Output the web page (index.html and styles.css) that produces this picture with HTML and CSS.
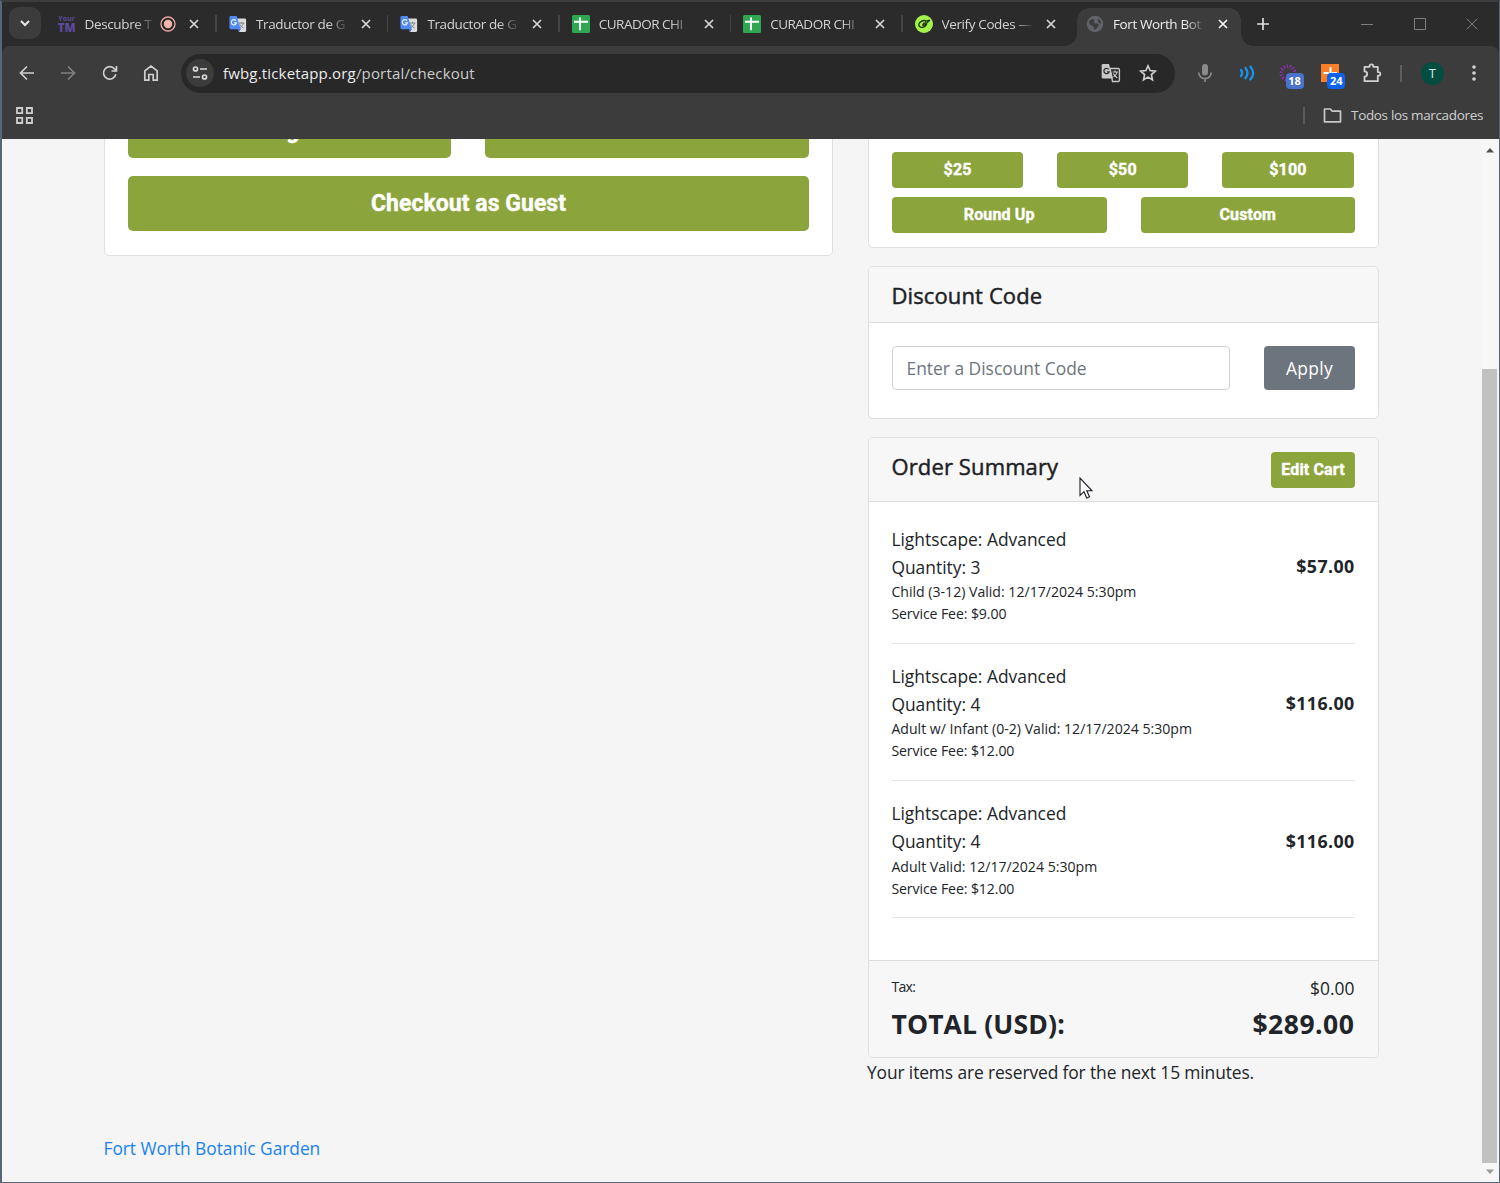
FILE: index.html
```html
<!DOCTYPE html>
<html lang="es">
<head>
<meta charset="utf-8">
<title>Fort Worth Botanic Garden</title>
<link rel="stylesheet" href="styles.css">
</head>
<body>
<svg class="defs" width="0" height="0" aria-hidden="true">
  <symbol id="i-close" viewBox="0 0 10 10"><path d="M1 1l8 8M9 1l-8 8" stroke="currentColor" stroke-width="1.7" fill="none"/></symbol>
  <symbol id="i-translate" viewBox="0 0 20 20">
    <path d="M8 4h9.500a1.500 1.500 0 0 1 1.500 1.500v12a1.500 1.500 0 0 1-1.500 1.500h-6.500z" fill="#dcdcdc"/>
    <path d="M11 9h6M14 7.500v1.500M16 9c-.5 2.500-2 4-4 5M12.300 10.500c1 2 2 3 4 4" stroke="#777b80" stroke-width="1" fill="none"/>
    <path d="M2 1h6.500l4.700 14.800H2A1.500 1.500 0 0 1 .5 14.300V2.500A1.500 1.500 0 0 1 2 1z" fill="#4f8af5"/>
    <path d="M11 19l-1-3.200h3.200z" fill="#2f62c4"/>
    <path d="M7.800 6.400A2.900 2.900 0 1 0 8.300 8.700H5.700" stroke="#e8f0ff" stroke-width="1.300" fill="none"/>
  </symbol>
  <symbol id="i-sheet" viewBox="0 0 18 18"><rect width="18" height="18" rx="1.500" fill="#2fa750"/><path d="M2 6.800h14M8 2.500v12.800" stroke="#fff" stroke-width="2" fill="none"/></symbol>
</svg>
<div class="window">
  <header class="tabs">
    <button class="tab-search"><svg width="12" height="12" viewBox="0 0 12 12"><path d="M2 4l4 4 4-4" fill="none" stroke="#e6e6e6" stroke-width="2"/></svg></button>
    <div class="tab">
      <span class="favicon yourtm"><span>Your</span><b>TM</b></span>
      <span class="title short">Descubre T</span>
      <svg class="rec" width="16" height="16" viewBox="0 0 16 16"><circle cx="8" cy="8" r="7" fill="none" stroke="#e8a49e" stroke-width="1.400"/><circle cx="8" cy="8" r="4.200" fill="#f5b5af"/></svg>
      <svg class="close"><use href="#i-close"/></svg>
    </div>
    <div class="tab"><svg class="favicon"><use href="#i-translate"/></svg><span class="title">Traductor de G</span><svg class="close"><use href="#i-close"/></svg></div>
    <div class="tab"><svg class="favicon"><use href="#i-translate"/></svg><span class="title">Traductor de G</span><svg class="close"><use href="#i-close"/></svg></div>
    <div class="tab"><svg class="favicon"><use href="#i-sheet"/></svg><span class="title caps">CURADOR CHI</span><svg class="close"><use href="#i-close"/></svg></div>
    <div class="tab"><svg class="favicon"><use href="#i-sheet"/></svg><span class="title caps">CURADOR CHI</span><svg class="close"><use href="#i-close"/></svg></div>
    <div class="tab last">
      <svg class="favicon" viewBox="0 0 18 18"><circle cx="9" cy="9" r="9" fill="#a4f34a"/><path d="M11 5.800C8 4.800 3.800 7 3.800 9.800s4 3.400 6.500 1.200c1.600-1.400 1.600-3 .2-3.200-1.600-.2-3.200 1.700-2.500 2.700 1.500.4 4-3 7-5.500M10 6.500l4.500-1.300" fill="none" stroke="#18320a" stroke-width="1.300"/></svg>
      <span class="title">Verify Codes —</span><svg class="close"><use href="#i-close"/></svg>
    </div>
    <div class="tab active">
      <svg class="favicon" viewBox="0 0 18 18"><circle cx="9" cy="9" r="8.200" fill="#60636a"/><path d="M3 6.500c1.500-2 3-2.500 5-2 1.500 1-1 2.300.3 3.500 1.500 1 3.700 0 4.500 1.500.6 1.500-1.200 2-1.800 3.200-.6 1.500-2 2-3 1.500 0-2-.3-3-1.700-3.500C4.800 10.200 3 9.500 3 6.500zM12 3.500c2 1 3 3 3 5-1.500 0-2.800-1-3-2.300z" fill="#3c3c3c"/></svg>
      <span class="title">Fort Worth Bot</span><svg class="close"><use href="#i-close"/></svg>
    </div>
    <button class="new-tab"><svg width="12" height="12" viewBox="0 0 12 12"><path d="M6 0v12M0 6h12" stroke="#dedede" stroke-width="1.700"/></svg></button>
    <div class="controls">
      <svg width="12" height="12" viewBox="0 0 12 12"><path d="M0 6.500h12"/></svg>
      <svg width="12" height="12" viewBox="0 0 12 12"><path d="M.5 .5h11v11H.5z"/></svg>
      <svg width="12" height="12" viewBox="0 0 12 12"><path d="M.5 .5l11 11M11.500 .5l-11 11"/></svg>
    </div>
  </header>
  <div class="chrome">
    <div class="toolbar">
      <div class="nav">
        <svg width="16" height="16" viewBox="0 0 16 16"><path d="M15 8H2M8 1.500L1.500 8 8 14.500"/></svg>
        <svg class="dim" width="16" height="16" viewBox="0 0 16 16"><path d="M1 8h13M8 1.500L14.500 8 8 14.500"/></svg>
        <svg width="16" height="16" viewBox="0 0 16 16"><path d="M13.800 9.200A6.200 6.200 0 1 1 12.700 4.200L14.500 6M14.500 1v5h-5"/></svg>
        <svg width="16" height="18" viewBox="0 0 16 18"><path d="M1.800 16.200V6.800L8 2l6.200 4.800v9.400H10.200v-5.700H5.800v5.700z"/></svg>
      </div>
      <div class="omnibox">
        <span class="site"><svg width="16" height="14" viewBox="0 0 16 14"><g fill="none" stroke="#d8d8d8" stroke-width="1.700"><circle cx="3.500" cy="3" r="2"/><path d="M8 3h7M1 11h7"/><circle cx="12.500" cy="11" r="2"/></g></svg></span>
        <span class="url">fwbg.ticketapp.org<span>/portal/checkout</span></span>
        <svg width="20" height="20" viewBox="0 0 20 20"><path d="M9 5.500h8.200a1.200 1.200 0 0 1 1.200 1.200v10.600a1.200 1.200 0 0 1-1.200 1.200h-5.700z" fill="none" stroke="#c8c8c8" stroke-width="1.400"/><path d="M11.500 9h5.500M14 7.500V9M16 9c-.5 2.500-1.800 4-3.500 5M12.300 10.500c1 2 2 3 4 4.500" stroke="#c8c8c8" stroke-width="1.200" fill="none"/><path d="M2 1h6l4 14.500H2A1.300 1.300 0 0 1 .7 14.200V2.300A1.300 1.300 0 0 1 2 1z" fill="#c8c8c8"/><path d="M7.800 6.400A2.700 2.700 0 1 0 8.200 8.800H5.800" stroke="#333" stroke-width="1.300" fill="none"/></svg>
        <svg class="star" width="18" height="18" viewBox="0 0 18 18"><path d="M9 1.800l2.100 4.800 5.200.5-3.900 3.500 1.100 5.200L9 13.100l-4.500 2.700 1.100-5.200L1.700 7.100l5.200-.5z" fill="none" stroke="#d0d0d0" stroke-width="1.600"/></svg>
      </div>
      <div class="extensions">
        <div class="ext"><svg width="16" height="20" viewBox="0 0 16 20"><rect x="5" y="1" width="6" height="11.500" rx="3" fill="#8a8a8a"/><path d="M1.800 9.500a6.200 6.200 0 0 0 12.400 0M8 15.500V19" stroke="#8a8a8a" stroke-width="1.700" fill="none"/></svg></div>
        <div class="ext"><svg width="18" height="16" viewBox="0 0 18 16"><g fill="none" stroke="#1b93ea" stroke-width="2.300" stroke-linecap="round"><path d="M3 5q2.300 3 0 6M7.500 3q4 5 0 10M12.300 1.500q5.800 6.500 0 13"/></g></svg></div>
        <div class="ext"><svg width="18" height="18" viewBox="0 0 18 18"><circle cx="9" cy="9" r="6.800" fill="none" stroke="#8a2fa8" stroke-width="3.600" stroke-dasharray="1.500 1.550"/></svg><span class="badge soft">18</span></div>
        <div class="ext"><svg width="18" height="18" viewBox="0 0 18 18"><path d="M0 0h18v18H0z" fill="#fb7f28"/><path d="M9.500 3v6M2.500 9H8M11 9h5" stroke="#fff" stroke-width="2"/></svg><span class="badge">24</span></div>
        <div class="ext"><svg width="20" height="20" viewBox="0 0 20 20"><path d="M2.500 3.800h5V3.200a1.900 1.900 0 0 1 3.800 0v.6h4.500v5.300h.7a1.700 1.700 0 0 1 0 3.600h-.7v5.500H2.500V13.700c3.600-.3 3.600-5 0-5.300z" fill="none" stroke="#d0d0d0" stroke-width="1.800" stroke-linejoin="round"/></svg></div>
      </div>
      <span class="divider"></span>
      <span class="avatar">T</span>
      <svg class="menu" width="4" height="16" viewBox="0 0 4 16"><g fill="#d4d4d4"><circle cx="2" cy="2" r="1.800"/><circle cx="2" cy="8" r="1.800"/><circle cx="2" cy="14" r="1.800"/></g></svg>
    </div>
    <div class="bookmarks">
      <svg width="17" height="17" viewBox="0 0 17 17"><path d="M1 1h5.200v5.200H1zM10.800 1H16v5.200h-5.200zM1 10.800h5.200V16H1zM10.800 10.800H16V16h-5.200z" fill="none" stroke="#cfcfcf" stroke-width="1.800"/></svg>
      <div class="all"><svg width="19" height="15" viewBox="0 0 19 15"><path d="M1.500 1h5.800l2 2.200h8.200v10.600h-16z" fill="none" stroke="#c8c8c8" stroke-width="1.700" stroke-linejoin="round"/></svg><span>Todos los marcadores</span></div>
    </div>
  </div>
  <div class="viewport">
    <main class="page">
      <div class="columns">
        <section class="card login">
          <div class="pair"><button class="btn big">Login</button><button class="btn big"></button></div>
          <button class="btn big">Checkout as Guest</button>
        </section>
        <aside class="side">
          <section class="card donate">
            <div class="row amounts"><button class="btn">$25</button><button class="btn">$50</button><button class="btn">$100</button></div>
            <div class="row"><button class="btn">Round Up</button><button class="btn">Custom</button></div>
          </section>
          <section class="card discount">
            <h2>Discount Code</h2>
            <div class="form"><input type="text" placeholder="Enter a Discount Code"><button class="apply">Apply</button></div>
          </section>
          <section class="card order">
            <div class="head"><h2>Order Summary</h2><button class="btn">Edit Cart</button></div>
            <div class="items">
              <div class="item"><div>Lightscape: Advanced<br>Quantity: 3<small>Child (3-12) Valid: 12/17/2024 5:30pm<br><span class="fee">Service Fee: $9.00</span></small></div><strong>$57.00</strong></div>
              <div class="item"><div>Lightscape: Advanced<br>Quantity: 4<small>Adult w/ Infant (0-2) Valid: 12/17/2024 5:30pm<br><span class="fee">Service Fee: $12.00</span></small></div><strong>$116.00</strong></div>
              <div class="item"><div>Lightscape: Advanced<br>Quantity: 4<small>Adult Valid: 12/17/2024 5:30pm<br><span class="fee">Service Fee: $12.00</span></small></div><strong>$116.00</strong></div>
            </div>
            <div class="foot">
              <div class="tax"><small>Tax:</small><span>$0.00</span></div>
              <div class="total"><span>TOTAL (USD):</span><span class="sum">$289.00</span></div>
            </div>
          </section>
          <p class="reserve">Your items are reserved for the next 15 minutes.</p>
        </aside>
      </div>
      <footer><a>Fort Worth Botanic Garden</a></footer>
    </main>
    <div class="scrollbar">
      <svg width="8" height="5" viewBox="0 0 8 5"><path d="M0 4.500L4 0l4 4.500z" fill="#505050"/></svg>
      <span class="thumb"></span>
      <svg width="8" height="5" viewBox="0 0 8 5"><path d="M0 .5L4 5 8 .5z" fill="#9a9a9a"/></svg>
    </div>
  </div>
  <svg class="cursor" width="14" height="22" viewBox="0 0 14 22"><path d="M1 1v17.500l4-3.800L7.700 21l2.800-1.200-2.700-6H13z" fill="#fff" stroke="#1c1c28" stroke-width="1.100"/></svg>
</div>
</body>
</html>
```
FILE: styles.css
```css
* { box-sizing: border-box; }
body { margin: 0; font-family: "Open Sans", "Noto Sans", sans-serif; color: #212529; }
button { border: 0; padding: 0; font: inherit; color: inherit; background: none; }
svg { display: block; flex: none; }
.defs { position: absolute; }

.window {
  position: relative; display: flex; flex-direction: column;
  width: 1500px; height: 1183px; overflow: hidden;
  border: solid #566779; border-width: 0 1px 1px 2px; border-top: 2px solid #3d3d3d;
  background: #2b2b2b;
}

/* Tab strip */
.tabs { display: flex; height: 44px; padding-left: 7px; color: #d2d2d2; font-size: 13.5px; letter-spacing: -.38px; }
.tab-search {
  display: flex; align-items: center; justify-content: center;
  width: 32px; height: 32px; margin: 5px 3.6px 0 0; border-radius: 10px; background: #3c3c3c;
}
.tab { position: relative; display: flex; align-items: center; width: 171.4px; padding: 0 16.500px 0 13px; }
.tab::after { content: ""; position: absolute; right: -1px; top: 13px; width: 1.500px; height: 17px; background: #454545; }
.tab.last::after { display: none; }
.favicon { width: 18px; height: 18px; margin-right: 9px; flex: none; }
.title {
  width: 91px; height: 24px; line-height: 24px; white-space: nowrap;
  -webkit-mask-image: linear-gradient(to right, #000 72px, transparent 93px);
  mask-image: linear-gradient(to right, #000 72px, transparent 93px);
}
.title.short { width: 67px; margin-right: 8px; -webkit-mask-image: linear-gradient(to right, #000 50px, transparent 71px); mask-image: linear-gradient(to right, #000 50px, transparent 71px); }
.title.caps { letter-spacing: -.5px; }
.close { width: 10px; height: 10px; margin-left: auto; color: #d6d6d6; }
.yourtm { display: flex; flex-direction: column; color: #5b4a9c; font: 700 7px/8px "Open Sans", sans-serif; letter-spacing: 0; text-align: center; }
.yourtm b { font-size: 11.5px; line-height: 10px; }
.tab.active { color: #ededed; }
.tab.active::after { display: none; }
.tab.active::before {
  content: ""; position: absolute; left: -8px; top: 6px; width: 188px; height: 38px;
  background:
    radial-gradient(circle at 0 0, transparent 11.500px, #3c3c3c 12px) left bottom / 12px 12px no-repeat,
    radial-gradient(circle at 12px 0, transparent 11.500px, #3c3c3c 12px) right bottom / 12px 12px no-repeat;
}
.tab.active::before { background: none; }
.tab.active {
  background:
    linear-gradient(#3c3c3c, #3c3c3c) 4px 18px / 164px 26px no-repeat,
    linear-gradient(#3c3c3c, #3c3c3c) 16px 6px / 140px 12px no-repeat,
    radial-gradient(circle at 12px 12px, #3c3c3c 11.500px, transparent 12px) 4px 6px / 12px 12px no-repeat,
    radial-gradient(circle at 0 12px, #3c3c3c 11.500px, transparent 12px) 156px 6px / 12px 12px no-repeat;
}
.tab.active::before {
  left: -8px; top: 32px; width: 188px; height: 12px;
  background:
    radial-gradient(circle at 0 0, transparent 11.500px, #3c3c3c 12px) left / 12px 12px no-repeat,
    radial-gradient(circle at 12px 0, transparent 11.500px, #3c3c3c 12px) right / 12px 12px no-repeat;
}
.tab.active .close { color: #f4f4f4; }
.new-tab { width: 38px; padding-left: 13px; }
.controls { display: flex; align-items: center; gap: 40.5px; margin-left: auto; padding-right: 20.600px; }
.controls path { fill: none; stroke: #7d7d7d; }

/* Toolbar and bookmarks */
.chrome { height: 93px; background: #3c3c3c; border-radius: 8px 8px 0 0; color: #cfcfcf; }
.toolbar { display: flex; align-items: center; height: 54px; }
.nav { display: flex; width: 179px; padding-left: 17px; gap: 25.3px; align-items: center; }
.nav path { fill: none; stroke: #cfcfcf; stroke-width: 1.700; }
.nav .dim path { stroke: #808080; }
.omnibox { display: flex; align-items: center; width: 994px; height: 39px; padding: 0 18px 0 5px; border-radius: 20px; background: #282828; }
.site { display: flex; align-items: center; justify-content: center; width: 28px; height: 28px; margin-right: 9px; border-radius: 50%; background: #3c3c3c; }
.url { flex: 1; color: #ececec; font-size: 15px; letter-spacing: .17px; }
.url span { color: #cccccc; }
.omnibox .star { margin-left: 18px; }
.extensions { display: flex; margin-left: 9.400px; }
.ext { position: relative; display: flex; align-items: center; justify-content: center; width: 41.6px; height: 36px; }
.badge {
  position: absolute; left: 18px; top: 18px; width: 18px; height: 16px; border-radius: 4px;
  background: #0d63f0; color: #fff; font-size: 11px; font-weight: 700; line-height: 16px; text-align: center;
}
.badge.soft { background: #4a72cc; }
.divider { width: 2px; height: 17px; margin-left: 8px; background: #5e5e5e; }
.avatar { width: 23px; height: 23px; margin-left: 18.600px; border-radius: 50%; background: #034d40; color: #d8ebe4; font-size: 13px; line-height: 23px; text-align: center; }
.menu { margin-left: 28px; }
.bookmarks { display: flex; align-items: center; height: 31px; padding: 0 16px 0 14px; }
.all { display: flex; align-items: center; gap: 9px; margin-left: auto; padding-left: 18px; font-size: 13.5px; letter-spacing: -.34px; line-height: 17px; border-left: 2px solid #5a5a5a; }

/* Scrolled page */
.viewport { display: flex; flex: 1; min-height: 0; overflow: hidden; background: #f5f5f5; }
.page { flex: 1; height: 1103px; margin-top: -60px; padding-left: 102px; font-size: 17.4px; line-height: 27.6px; }
.columns { display: flex; align-items: flex-start; gap: 35px; }
.card { border: 1px solid #dfdfdf; border-radius: 5px; background: #fff; }
.login { width: 729px; height: 176.500px; padding: 23px 23px 0; }
.login > .btn { display: block; width: 681px; margin-top: 18px; }
.pair { display: flex; gap: 34px; }
.pair .btn { width: 323px; }
.pair .btn + .btn { width: 324px; }
.btn { height: 36px; border-radius: 4px; background: #8ca43c; color: #fff; font: 700 16px/36px Roboto, sans-serif; letter-spacing: .15px; -webkit-text-stroke: .4px #fff; }
.btn.big { height: 55px; font-size: 23px; line-height: 56px; letter-spacing: .04px; border-radius: 5px; }
.side { width: 511px; }
.donate { height: 168.500px; padding: 72px 23px 0; }
.donate .row { display: flex; gap: 34px; margin-bottom: 9px; }
.donate .amounts { padding-right: 1.500px; }
.donate .btn { flex: 1; }
h2 { margin: 0; font-size: 22px; font-weight: 400; line-height: 27px; letter-spacing: .12px; color: #1d2124; -webkit-text-stroke: .45px #1d2124; }
.discount { height: 152.500px; margin-top: 18.500px; }
.discount h2 { height: 56px; padding: 15px 22.500px; background: #f7f7f7; border-bottom: 1px solid #dcdcdc; border-radius: 4px 4px 0 0; }
.form { display: flex; justify-content: space-between; padding: 23px; }
.form input { width: 338px; height: 44px; padding: 0 13.500px; border: 1px solid #ced4da; border-radius: 4px; font: 17.4px "Open Sans", sans-serif; }
.form input::placeholder { color: #6c757d; }
.apply { width: 91px; height: 44px; padding-top: 1px; border-radius: 4px; background: #6c757d; color: #fff; letter-spacing: .3px; }
.order { height: 621px; margin-top: 18.500px; display: flex; flex-direction: column; }
.head { display: flex; justify-content: space-between; height: 64px; padding: 14px 23px 0 22.500px; background: #f7f7f7; border-bottom: 1px solid #dcdcdc; border-radius: 4px 4px 0 0; }
.head h2 { padding-top: 1px; }
.head .btn { width: 84px; }
.items { flex: 1; padding: 24px 23px 0; }
.item { display: flex; justify-content: space-between; height: 118px; margin-bottom: 19.200px; border-bottom: 1px solid #e4e4e4; }
.item > div { margin-left: -.6px; }
.item small { display: block; }
small { font-size: 14.1px; line-height: 22px; }
.fee { letter-spacing: -.1px; }
.item strong { padding-top: 27.2px; font-size: 17.800px; letter-spacing: .4px; margin-right: .4px; }
.foot { height: 97px; padding: 14px 23.600px 14px 22.400px; background: #f7f7f7; border-top: 1px solid #dcdcdc; border-radius: 0 0 4px 4px; }
.tax, .total { display: flex; justify-content: space-between; }
.tax small { padding-top: 1px; letter-spacing: -.7px; }
.total { margin-top: 3px; font-size: 26.500px; font-weight: 700; line-height: 36px; letter-spacing: .15px; }
.total .sum { letter-spacing: .5px; }
.reserve { margin: 1px 0 0 -1px; letter-spacing: -.12px; }
footer { margin: 48px 0 0 -.5px; letter-spacing: -.06px; color: #1a82f0; }

.scrollbar { display: flex; flex-direction: column; align-items: center; width: 18px; padding: 9px 2px 8px 1px; background: #f7f7f7; }
.thumb { width: 15px; height: 794px; margin: 216px 0 auto; background: #c1c1c1; }
.cursor { position: absolute; left: 1077px; top: 475px; }
```
